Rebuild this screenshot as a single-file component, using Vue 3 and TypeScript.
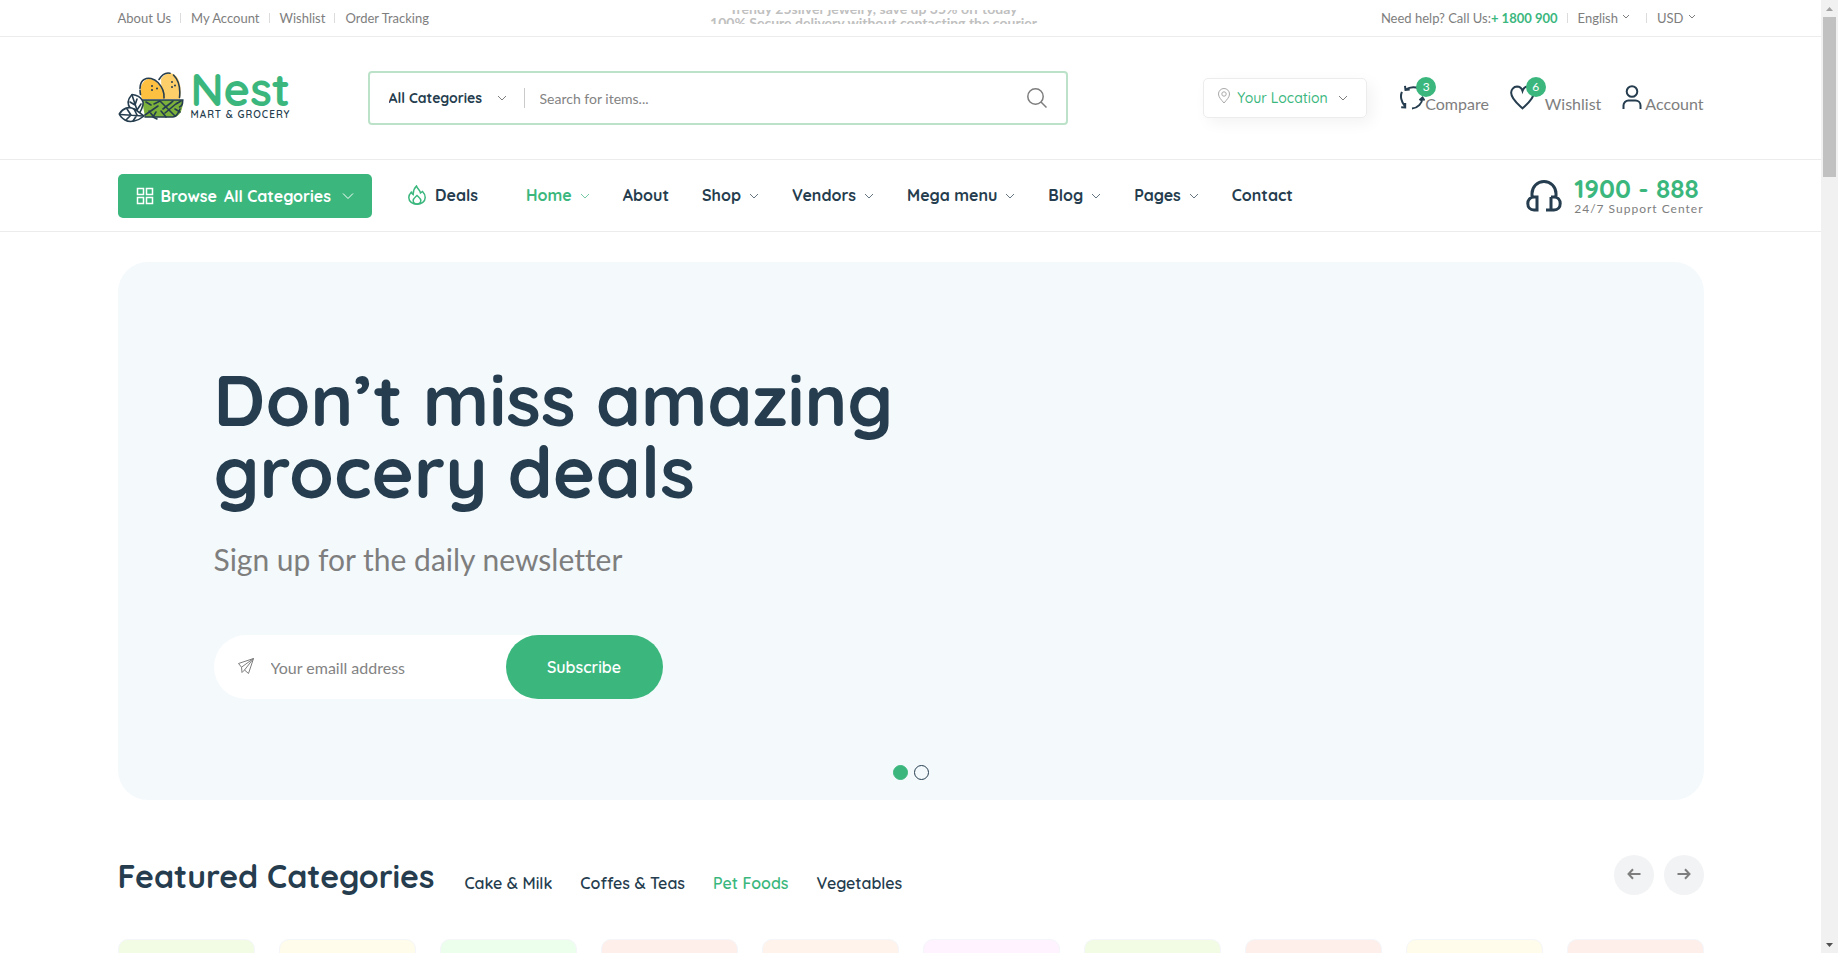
<script setup lang="ts">
import { ref } from 'vue'

interface NavItem { label: string; menu: boolean }

const topLinks: string[] = ['About Us', 'My Account', 'Wishlist', 'Order Tracking']
const navItems: NavItem[] = [
  { label: 'Home', menu: true },
  { label: 'About', menu: false },
  { label: 'Shop', menu: true },
  { label: 'Vendors', menu: true },
  { label: 'Mega menu', menu: true },
  { label: 'Blog', menu: true },
  { label: 'Pages', menu: true },
  { label: 'Contact', menu: false }
]
const activeNav = ref('Home')
const tabs: string[] = ['Cake & Milk', 'Coffes & Teas', 'Pet Foods', 'Vegetables']
const activeTab = ref('Pet Foods')
const slide = ref(0)
const search = ref('')
const email = ref('')
const cards: string[] = ['lime', 'cream', 'mint', 'rose', 'peach', 'pink', 'lime', 'rose', 'cream', 'rose']
</script>

<template>
  <div class="page">
    <div class="content">
      <header>
        <div class="topbar">
          <div class="container topbar-row">
            <nav class="top-links" aria-label="Information">
              <a v-for="link in topLinks" :key="link" href="#">{{ link }}</a>
            </nav>
            <div class="ticker">
              <ul>
                <li>Trendy 25silver jewelry, save up 35% off today</li>
                <li>100% Secure delivery without contacting the courier</li>
              </ul>
            </div>
            <div class="top-right">
              <span>Need help? Call Us:<a class="phone" href="#">+ 1800 900</a></span>
              <button type="button" class="language">English
                <svg viewBox="0 0 8 6" class="mini-caret"><path d="M1 1l3 3 3-3" /></svg>
              </button>
              <button type="button">USD
                <svg viewBox="0 0 8 6" class="mini-caret"><path d="M1 1l3 3 3-3" /></svg>
              </button>
            </div>
          </div>
        </div>

        <div class="middle">
          <div class="container middle-row">
            <a href="#" class="logo" aria-label="Nest Mart and Grocery">
              <svg viewBox="0 0 66 52" class="logo-mark">
                <path d="M43 8C46 3 50 1.500 54 2.500C61 5 64 14 62 28H44Z" fill="#fdcf6b" />
                <path d="M24 28C20 17 25 8 31 8C39 8 46 18 46 28Z" fill="#fdc040" />
                <path d="M24 29H65C65 38 62 46 56 46H27Z" fill="#7bb03b" />
                <g fill="none" stroke="#253d4e" stroke-width="1.600" stroke-linecap="round" stroke-linejoin="round">
                  <path d="M22.500 23.500C21 15 23 10 26.500 8.300C30 6 36 7.500 40 11.500C45 17 46.500 22 46 27" stroke-dasharray="4 2 70" />
                  <path d="M41 8.500C44 3.500 48 1.300 52 2.200M55.500 4C60.500 9 62.500 18 61.500 26.500" />
                  <path d="M21 29H65M64.500 29C65 33 64 35 61.500 36M62 38C60 43 58 46 55 46H27" />
                  <path d="M28 31l5 3M27 44l13-9M31 40l4 5M36 33l6-3M42 30l15 15M47 42l12-10M54 31l-9 7M38 41l-3 5 4 2M50 34l5-4M48 46l-5-6M58 33l5-3M57 38l5 3" />
                  <path d="M14 23.500C9 29 9 34 13 38C16 42 19 43 21 43C24 38 27 32 24 29C22 25 18 24 14 23.500Z" fill="#fff" />
                  <path d="M14 24l6 18M12 31l5 3 2-6M15 38l4 1 4-6" />
                  <path d="M1.300 43C5 37 11 35 16 38C20 40 22 42 26 45C20 50 12 52 7 49C4 47 2 45 1.300 43Z" fill="#fff" />
                  <path d="M2 43.500l23 1.500M9 38l4 6-5 5M16 38l3 6-4 6" />
                </g>
                <g fill="#253d4e">
                  <circle cx="34" cy="15" r="1" /><circle cx="34" cy="19" r="1" /><circle cx="39" cy="17.500" r="1" />
                  <circle cx="54" cy="11" r="1" /><circle cx="54" cy="16" r="1" /><circle cx="57" cy="14.500" r="1" />
                </g>
              </svg>
              <span class="logo-words">
                <span class="logo-name">Nest</span>
                <span class="logo-tag">MART &amp; GROCERY</span>
              </span>
            </a>

            <form class="search" @submit.prevent>
              <label class="category">
                <select aria-label="Category">
                  <option>All Categories</option>
                </select>
                <svg viewBox="0 0 10 8" class="caret"><path d="M1 2l4 4 4-4" /></svg>
              </label>
              <input v-model="search" type="text" aria-label="Search" placeholder="Search for items..." />
              <button type="submit" aria-label="Search">
                <svg viewBox="0 0 20 20" class="search-icon"><circle cx="8.500" cy="8.500" r="7.700" /><path d="M14 14l5.500 5.500" /></svg>
              </button>
            </form>

            <div class="actions">
              <label class="location">
                <svg viewBox="0 0 14 16" class="pin"><path d="M7 15C4 11.500 1.500 9 1.500 6a5.500 5.500 0 0 1 11 0C12.500 9 10 11.500 7 15Z" /><circle cx="7" cy="6" r="2.200" /></svg>
                <select aria-label="Location">
                  <option>Your Location</option>
                </select>
                <svg viewBox="0 0 10 8" class="caret"><path d="M1 2l4 4 4-4" /></svg>
              </label>
              <a href="#" class="action">
                <span class="action-icon">
                  <svg viewBox="0 0 25 25">
                    <path d="M5 .8l.5 4 4.200-.4M5.500 4.600Q12 .5 19 3.500M1.900 6.800C0 11 1.200 17 5 21.300M1.200 22.300l4 .2V18M12 23.500C18 23 22 18.500 22.500 13M19.500 15.200l3-2.700 2 3" />
                  </svg>
                  <span class="badge">3</span>
                </span>
                <span>Compare</span>
              </a>
              <a href="#" class="action wish">
                <span class="action-icon">
                  <svg viewBox="0 0 25 25">
                    <path d="M12.500 23.300C8 19 1.200 14 1.200 8A6 6 0 0 1 7 1.600C10 1.600 11.700 3.500 12.500 6C13.300 3.500 15 1.600 18 1.600A6 6 0 0 1 23.800 8C23.800 14 17 19 12.500 23.300Z" />
                  </svg>
                  <span class="badge">6</span>
                </span>
                <span>Wishlist</span>
              </a>
              <a href="#" class="action account">
                <span class="action-icon">
                  <svg viewBox="0 0 20 25">
                    <circle cx="10" cy="6.500" r="5.300" /><path d="M1.500 24V20.500A5 5 0 0 1 6.500 15.500H13.500A5 5 0 0 1 18.500 20.500V24" />
                  </svg>
                </span>
                <span>Account</span>
              </a>
            </div>
          </div>
        </div>

        <div class="navbar">
          <div class="container nav-row">
            <button type="button" class="browse">
              <svg viewBox="0 0 18 18" class="grid-icon"><path d="M1.500 1.500h6v6h-6zM10.500 1.500h6v6h-6zM1.500 10.500h6v6h-6zM10.500 10.500h6v6h-6z" /></svg>
              <span>Browse</span>
              <span>All Categories</span>
              <svg viewBox="0 0 12 8" class="browse-caret"><path d="M1 1.500l5 5 5-5" /></svg>
            </button>
            <a href="#" class="deals">
              <svg viewBox="0 0 18 20" class="flame">
                <path d="M8.500 1C9.500 4 12 5 12.500 8L14.500 6.500C16.500 8.500 17.200 10.500 17.200 12.500C17.200 16.500 13.500 19.200 9 19.200S.8 16.500 .8 12.500C.8 10 2 8.500 3.200 7.200C3.800 8.500 4.300 9 5.200 9.500C5 5.500 6.500 3 8.500 1Z" />
                <path d="M9 10.500C11 12.500 12.800 13.500 12.800 15.500C12.800 18 11 19 9 19S5.200 18 5.200 15.500C5.200 13.500 7 12.500 9 10.500Z" />
              </svg>
              Deals
            </a>
            <nav class="main-nav" aria-label="Main">
              <a
                v-for="item in navItems"
                :key="item.label"
                href="#"
                :class="{ active: item.label === activeNav }"
                @click.prevent="activeNav = item.label"
              >{{ item.label }}<svg v-if="item.menu" viewBox="0 0 10 8" class="caret"><path d="M1 2l4 4 4-4" /></svg></a>
            </nav>
            <div class="support">
              <svg viewBox="0 0 36 32" class="headset">
                <path d="M6 18V13.500A12 12 0 0 1 30 13.500V18M11 17H8C4 17 1.800 20 1.800 23.500S4 30 8 30H11ZM25 17H28C32 17 34.200 20 34.200 23.500S32 30 28 30H20M25 17V30" />
              </svg>
              <div class="support-text">
                <a href="#">1900 - 888</a>
                <span>24/7 Support Center</span>
              </div>
            </div>
          </div>
        </div>
      </header>

      <main class="container">
        <section class="hero">
          <h1>Don’t miss amazing<br />grocery deals</h1>
          <p>Sign up for the daily newsletter</p>
          <form class="subscribe" @submit.prevent>
            <svg viewBox="0 0 18 18" class="plane"><path d="M16.500 1.500L1.500 6.500L4.500 10.200L16.500 1.500L11.500 16.500L7.500 13L16.500 1.500M4.500 10.200L5 15.500L7.500 13" /></svg>
            <input v-model="email" type="email" aria-label="Email" placeholder="Your emaill address" />
            <button type="submit">Subscribe</button>
          </form>
          <div class="dots">
            <button
              v-for="n in 2"
              :key="n"
              type="button"
              :aria-label="`Slide ${n}`"
              :class="{ on: slide === n - 1 }"
              @click="slide = n - 1"
            ></button>
          </div>
        </section>

        <section class="featured">
          <div class="featured-head">
            <h2>Featured Categories</h2>
            <ul class="tabs">
              <li v-for="tab in tabs" :key="tab">
                <a href="#" :class="{ active: tab === activeTab }" @click.prevent="activeTab = tab">{{ tab }}</a>
              </li>
            </ul>
            <div class="arrows">
              <button type="button" aria-label="Previous"><svg viewBox="0 0 14 12"><path d="M13.500 6H1.500M6 1.200L1.500 6L6 10.800" /></svg></button>
              <button type="button" aria-label="Next"><svg viewBox="0 0 14 12"><path d="M.5 6H12.500M8 1.200L12.500 6L8 10.800" /></svg></button>
            </div>
          </div>
          <div class="cards">
            <div v-for="(tone, i) in cards" :key="i" class="card" :class="tone"></div>
          </div>
        </section>
      </main>
    </div>

    <div class="scrollbar" aria-hidden="true">
      <svg viewBox="0 0 17 17"><path d="M5 11l3.500-4 3.500 4z" fill="#a3a3a3" /></svg>
      <div class="thumb"></div>
      <svg viewBox="0 0 17 17"><path d="M5 7l3.500 4L12 7z" fill="#505050" /></svg>
    </div>
  </div>
</template>

<style>
body {
  margin: 0;
  overflow: hidden;
}
</style>

<style scoped>
.page {
  display: flex;
  height: 100vh;
  overflow: hidden;
  background: #fff;
  color: #7e7e7e;
  font-family: Lato, sans-serif;
  font-size: 16px;
  font-variant-ligatures: none;
}

.page *,
.page *::before {
  box-sizing: border-box;
}

a {
  color: inherit;
  text-decoration: none;
}

button,
input,
select {
  margin: 0;
  padding: 0;
  border: 0;
  outline: 0;
  background: none;
  color: inherit;
  font: inherit;
}

button {
  cursor: pointer;
}

select {
  appearance: none;
}

ul {
  margin: 0;
  padding: 0;
  list-style: none;
}

svg {
  display: block;
  flex: none;
  fill: none;
  stroke: currentColor;
}

.content {
  flex: 1;
  min-width: 0;
  overflow: hidden;
}

.container {
  max-width: 1586px;
  margin: 0 auto;
}

.topbar {
  border-bottom: 1px solid #ececec;
}

.topbar-row {
  display: grid;
  grid-template-columns: 1fr 2fr 1fr;
  align-items: center;
  height: 36px;
  font-size: 13px;
  line-height: 20px;
  white-space: nowrap;
}

.top-links,
.top-right {
  display: flex;
  align-items: center;
}

.top-links a + a::before,
.top-right button::before {
  content: '';
  display: inline-block;
  width: 1px;
  height: 10px;
  margin: 0 10px 0 9px;
  background: #dcdcdc;
}

.top-right {
  justify-content: flex-end;
  padding-right: 8px;
}

.top-right .phone {
  color: #3bb77e;
  font-weight: 700;
}

.top-right button {
  display: flex;
  align-items: center;
}

.top-right .language {
  margin-right: 7px;
}

.mini-caret {
  width: 8px;
  height: 6px;
  margin: 0 0 2px 4px;
}

.ticker {
  height: 14px;
  margin: 0 0 2px -74px;
  overflow: hidden;
  color: #c0c0c0;
  font-size: 14px;
  font-weight: 700;
  line-height: 14px;
  text-align: center;
}

.ticker ul {
  margin-top: -8px;
}

.middle {
  border-bottom: 1px solid #ececec;
}

.middle-row {
  display: flex;
  align-items: center;
  height: 122px;
}

.logo {
  display: flex;
  gap: 7px;
  width: 250px;
  margin-bottom: 2px;
  color: #253d4e;
  font-family: Quicksand, Inter, sans-serif;
}

.logo-mark {
  width: 66px;
  height: 52px;
  stroke: none;
}

.logo-words {
  display: flex;
  flex-direction: column;
}

.logo-name {
  color: #3bb77e;
  font-size: 45px;
  font-weight: 700;
  line-height: 36px;
}

.logo-tag {
  font-size: 10px;
  font-weight: 600;
  line-height: 16px;
  letter-spacing: 1px;
}

.search {
  display: flex;
  align-items: center;
  width: 700px;
  height: 54px;
  padding: 0 19px;
  border: 2px solid #bce3c9;
  border-radius: 4px;
}

.category {
  display: flex;
  align-items: center;
  gap: 14px;
  height: 20px;
  padding-right: 17px;
  border-right: 1px solid #cacaca;
  color: #253d4e;
}

.category select {
  font-family: Quicksand, Inter, sans-serif;
  font-size: 14px;
  font-weight: 700;
}

.category .caret,
.location .caret {
  color: #7e7e7e;
}

.caret {
  width: 10px;
  height: 8px;
}

.search input {
  flex: 1;
  min-width: 0;
  height: 40px;
  padding-left: 15px;
  font-size: 14px;
}

input::placeholder {
  color: #838383;
  opacity: 1;
}

.search-icon {
  width: 20px;
  height: 20px;
  stroke-width: 1.500px;
}

.actions {
  display: flex;
  align-items: center;
  gap: 21px;
  margin-left: auto;
}

.location {
  display: flex;
  align-items: center;
  height: 40px;
  margin-right: 12px;
  padding: 0 18px 0 13px;
  border: 1px solid #ececec;
  border-radius: 5px;
  box-shadow: 5px 5px 15px rgba(0, 0, 0, 0.05);
  color: #3bb77e;
}

.location select {
  margin: 0 10px 0 6px;
  font-family: Quicksand, Inter, sans-serif;
  font-size: 14px;
  font-weight: 500;
}

.pin {
  width: 14px;
  height: 16px;
  margin-bottom: 4px;
  color: #a9a9a9;
}

.action {
  display: flex;
  align-items: flex-end;
  margin-bottom: 2px;
  line-height: 20px;
}

.action > span:last-child {
  margin-bottom: -4px;
}

.wish {
  gap: 10px;
}

.account {
  gap: 3px;
}

.action-icon {
  position: relative;
  color: #253d4e;
}

.action-icon svg {
  height: 25px;
  stroke-width: 2;
}

.badge {
  position: absolute;
  top: -8px;
  right: -11px;
  width: 20px;
  height: 20px;
  border-radius: 50%;
  background: #3bb77e;
  color: #fff;
  font-size: 12px;
  line-height: 20px;
  text-align: center;
}

.navbar {
  border-bottom: 1px solid #ececec;
}

.nav-row {
  display: flex;
  align-items: center;
  height: 71px;
  color: #253d4e;
  font-family: Quicksand, Inter, sans-serif;
  font-weight: 700;
  white-space: nowrap;
}

.browse {
  display: flex;
  align-items: center;
  gap: 7px;
  height: 44px;
  padding: 0 18px;
  border-radius: 5px;
  background: #3bb77e;
  color: #fff;
}

.grid-icon {
  width: 18px;
  height: 18px;
  stroke-width: 1.500px;
}

.browse-caret {
  width: 12px;
  height: 8px;
  margin-left: 4px;
}

.deals {
  display: flex;
  align-items: center;
  gap: 9px;
  margin: 0 48px 2px 36px;
}

.flame {
  width: 18px;
  height: 20px;
  color: #3bb77e;
  stroke-width: 1.500px;
}

.main-nav {
  display: flex;
  gap: 33px;
  margin-bottom: 2px;
}

.main-nav a {
  display: flex;
  align-items: center;
}

.main-nav .caret {
  margin: 3px 0 0 8px;
  opacity: 0.7;
}

.active {
  color: #3bb77e;
}

.support {
  display: flex;
  align-items: center;
  gap: 12px;
  margin-left: auto;
}

.headset {
  width: 36px;
  height: 32px;
  stroke-width: 3;
}

.support-text {
  display: flex;
  flex-direction: column;
}

.support-text a {
  color: #3bb77e;
  font-size: 26px;
  line-height: 26px;
}

.support-text span {
  color: #7e7e7e;
  font: 400 12px/14px Lato, sans-serif;
  letter-spacing: 1px;
}

.hero {
  position: relative;
  height: 538px;
  margin-top: 30px;
  padding: 101px 96px 0;
  border-radius: 30px;
  background: #f4f9fc;
}

h1,
h2 {
  margin: 0;
  color: #253d4e;
  font-family: Quicksand, Inter, sans-serif;
  font-weight: 700;
}

h1 {
  font-size: 72px;
  line-height: 72px;
}

.hero p {
  margin: 31px 0 55px;
  font-size: 30px;
  line-height: 42px;
}

.subscribe {
  display: flex;
  align-items: center;
  width: 449px;
  height: 64px;
  padding-left: 23px;
  border-radius: 32px;
  background: #fff;
}

.plane {
  width: 18px;
  height: 18px;
  margin-bottom: 2px;
}

.subscribe input {
  flex: 1;
  min-width: 0;
  height: 40px;
  padding-left: 16px;
}

.subscribe button {
  width: 157px;
  height: 64px;
  border-radius: 32px;
  background: #3bb77e;
  color: #fff;
  font-family: Quicksand, Inter, sans-serif;
  font-weight: 600;
}

.dots {
  position: absolute;
  right: 0;
  bottom: 20px;
  left: 0;
  display: flex;
  justify-content: center;
  gap: 6px;
}

.dots button {
  width: 15px;
  height: 15px;
  border: 1px solid #253d4e;
  border-radius: 50%;
}

.dots .on {
  border-color: #3bb77e;
  background: #3bb77e;
}

.featured-head {
  display: flex;
  align-items: flex-end;
  height: 40px;
  margin: 55px 0 44px;
}

h2 {
  font-size: 32px;
  line-height: 38px;
}

.tabs {
  display: flex;
  gap: 28px;
  margin-left: 30px;
  color: #253d4e;
  font-family: Quicksand, Inter, sans-serif;
  font-weight: 600;
  line-height: 24px;
}

.arrows {
  display: flex;
  gap: 10px;
  margin-left: auto;
}

.arrows button {
  display: grid;
  place-items: center;
  width: 40px;
  height: 40px;
  padding-bottom: 2px;
  border-radius: 50%;
  background: #f2f3f4;
}

.arrows svg {
  width: 14px;
  height: 12px;
  stroke-width: 2;
}

.cards {
  display: grid;
  grid-template-columns: repeat(10, 1fr);
  gap: 24px;
}

.card {
  height: 180px;
  border: 1px solid #f4f6fa;
  border-radius: 10px;
}

.lime { background: #f2fce4; }
.cream { background: #fffceb; }
.mint { background: #ecffec; }
.rose { background: #feefea; }
.peach { background: #fff3eb; }
.pink { background: #fff3ff; }

.scrollbar {
  display: flex;
  flex-direction: column;
  width: 17px;
  background: #f1f1f1;
}

.scrollbar svg {
  width: 17px;
  height: 17px;
  stroke: none;
}

.thumb {
  height: 160px;
  margin: 0 2px auto;
  background: #c1c1c1;
}
</style>
